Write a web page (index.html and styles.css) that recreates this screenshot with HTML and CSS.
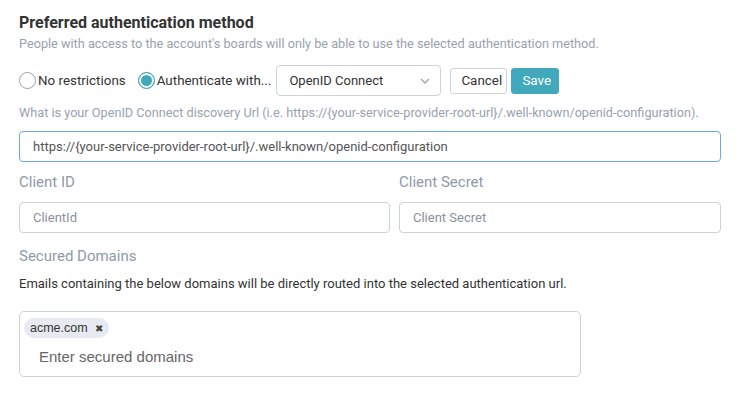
FILE: index.html
```html
<!DOCTYPE html>
<html lang="en">
    <head>
        <meta charset="UTF-8">
        <title>Preferred authentication method</title>
        <link rel="stylesheet" href="styles.css">
    </head>
    <body>
        <div class="panel">
            <h3 class="title">Preferred authentication method</h3>
            <p class="subtitle">People with access to the account's boards will only be able to use the selected authentication method.</p>

            <div class="method-row">
                <label class="radio">
                    <span class="dot"></span>No restrictions
                </label>
                <label class="radio checked">
                    <span class="dot"></span>Authenticate with...
                </label>
                <div class="select">
                    <span>OpenID Connect</span>
                    <svg width="10" height="6" viewBox="0 0 10 6"><path d="M1 1l4 4 4-4" fill="none" stroke="#a9afba" stroke-width="1.6"/></svg>
                </div>
                <button class="btn cancel">Cancel</button>
                <button class="btn save">Save</button>
            </div>

            <p class="hint">What is your OpenID Connect discovery Url (i.e. https://{your-service-provider-root-url}/.well-known/openid-configuration).</p>
            <div class="input focus">https://{your-service-provider-root-url}/.well-known/openid-configuration</div>

            <div class="cols">
                <div>
                    <div class="field-label">Client ID</div>
                    <div class="input placeholder">ClientId</div>
                </div>
                <div>
                    <div class="field-label">Client Secret</div>
                    <div class="input placeholder">Client Secret</div>
                </div>
            </div>

            <div class="field-label domains">Secured Domains</div>
            <p class="desc">Emails containing the below domains will be directly routed into the selected authentication url.</p>
            <div class="tags">
                <div class="chips">
                    <span class="chip">acme.com <span class="x">&#10006;</span></span>
                </div>
                <div class="tag-placeholder">Enter secured domains</div>
            </div>
        </div>
    </body>
</html>
```

FILE: styles.css
```css
body {
    margin: 0;
    font-family: Roboto, "Liberation Sans", sans-serif;
    background-color: #ffffff;
    color: #333;
}
.panel {
    padding: 13px 19px 0 19px;
}
.title {
    margin: 0;
    font-size: 16px;
    font-weight: 700;
    color: #333;
    line-height: 19px;
}
.subtitle {
    margin: 4px 0 0 0;
    font-size: 12.7px;
    color: #9aa1ae;
    line-height: 16px;
}
.method-row {
    display: flex;
    align-items: center;
    margin-top: 13px;
    height: 31px;
}
.radio {
    display: flex;
    align-items: center;
    font-size: 13.4px;
    color: #333;
    margin-right: 12px;
}
.radio .dot {
    width: 17px;
    height: 17px;
    border: 1px solid #9aa1ae;
    border-radius: 50%;
    box-sizing: border-box;
    margin-right: 2px;
}
.radio.checked {
    margin-right: 5px;
}
.radio.checked .dot {
    border: 1px solid #3f9fb3;
    background: #41a9bb;
    box-shadow: inset 0 0 0 2px #ffffff;
}
.select {
    width: 165px;
    height: 31px;
    box-sizing: border-box;
    border: 1px solid #cfd3da;
    border-radius: 4px;
    display: flex;
    align-items: center;
    justify-content: space-between;
    padding: 0 10px 0 12px;
    font-size: 13px;
    color: #333;
}
.btn {
    font-family: Roboto, sans-serif;
    font-size: 13.4px;
    height: 26px;
    border-radius: 3px;
    padding: 0 10px;
    cursor: pointer;
}
.cancel {
    margin-left: 9px;
    background: #ffffff;
    border: 1px solid #cfd3da;
    color: #333;
    width: 57px;
}
.save {
    margin-left: 4px;
    background: #41a9bb;
    border: 1px solid #41a9bb;
    color: #ffffff;
    width: 48px;
}
.hint {
    margin: 9px 0 0 0;
    font-size: 12.7px;
    color: #9aa1ae;
    line-height: 16px;
}
.input {
    height: 31px;
    box-sizing: border-box;
    border: 1px solid #cfd3da;
    border-radius: 4px;
    display: flex;
    align-items: center;
    padding: 0 13px;
    font-size: 13px;
    color: #555;
}
.input.focus {
    margin-top: 10px;
    border-color: #6aa9e6;
}
.input.placeholder {
    color: #8a919c;
}
.cols {
    display: grid;
    grid-template-columns: 371px 1fr;
    gap: 9px;
}
.field-label {
    font-size: 15px;
    color: #8f99a8;
    line-height: 18px;
    margin: 11px 0 11px 0;
}
.field-label.domains {
    margin-top: 14px;
}
.desc {
    margin: 11px 0 0 0;
    font-size: 13px;
    color: #333;
    line-height: 16px;
}
.tags {
    margin-top: 19px;
    width: 562px;
    height: 66px;
    box-sizing: border-box;
    border: 1px solid #cfd3da;
    border-radius: 5px;
    padding: 6px 4px;
    font-family: "Liberation Sans", Arial, sans-serif;
}
.chip {
    display: inline-flex;
    align-items: center;
    height: 20px;
    padding: 0 6px 0 6px;
    border-radius: 10px;
    background: #e8eaf1;
    font-size: 12.5px;
    color: #333;
}
.chip .x {
    font-size: 10px;
    margin-left: 7px;
    color: #444;
}
.tag-placeholder {
    margin: 10px 0 0 15px;
    font-size: 15px;
    color: #666;
}
```
